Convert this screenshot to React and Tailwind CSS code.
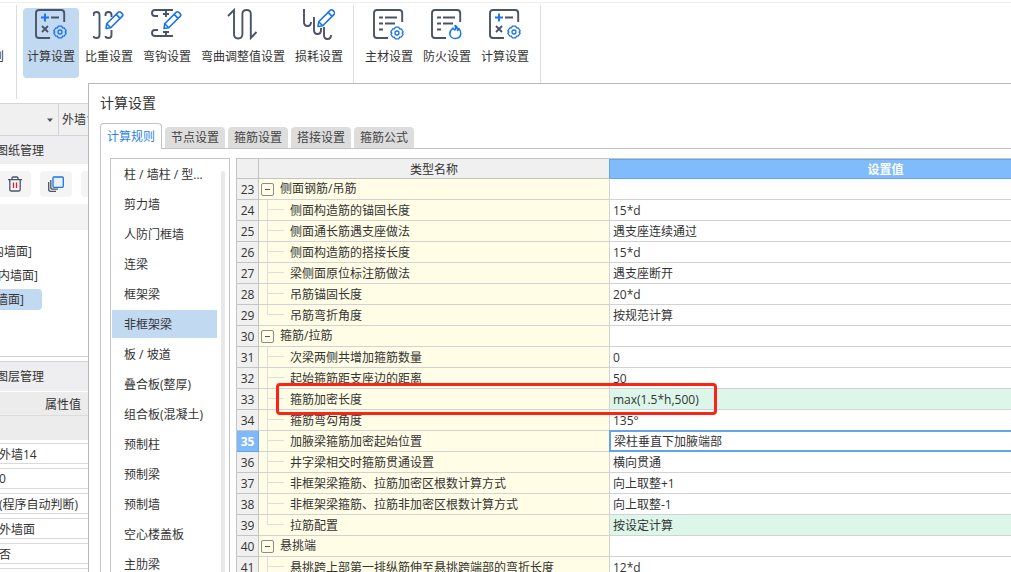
import React from 'react';

const Gear = ({ x, y }) => (
  <g transform={`translate(${x} ${y})`} stroke="#1a73e8" strokeWidth="1.3" fill="none" strokeLinejoin="round">
    <path d="M-1.8 -5.8H1.8L2.5 -4.2L4.3 -4L6.2 -1.2L5.2 0L6.2 1.2L4.3 4L2.5 4.2L1.8 5.8H-1.8L-2.5 4.2L-4.3 4L-6.2 1.2L-5.2 0L-6.2 -1.2L-4.3 -4L-2.5 -4.2Z" />
    <circle r="2" />
  </g>
);

const Pencil = ({ x, y }) => (
  <g transform={`translate(${x} ${y})`} stroke="#1a73e8" strokeWidth="1.6" fill="#fff" strokeLinejoin="round">
    <path d="M0.5 17.5L1.2 12.8L12.6 1.4Q14 0 15.4 1.4L16.6 2.6Q18 4 16.6 5.4L5.2 16.8Z" />
    <path d="M10.6 3.4L14.6 7.4M1.2 12.8L5.2 16.8" />
  </g>
);

const Icon = ({ children }) => (
  <svg width="32" height="32" viewBox="0 0 32 32" fill="none" stroke="#4b5368" strokeWidth="1.9">
    {children}
  </svg>
);

const frame = 'M29.2 14V5Q29.2 2 26.2 2H4Q1 2 1 5V27Q1 30 4 30H15';

const CalcIcon = () => (
  <Icon>
    <path d={frame} />
    <path d="M10 5.5V13.5M6 9.5H14" stroke="#1a73e8" />
    <path d="M16 9.5H24M7 18L13 24M13 18L7 24" />
    <Gear x={25} y={24} />
  </Icon>
);

const WeightIcon = () => (
  <Icon>
    <path d="M0.5 8V6.5Q0.5 4 3.5 4T6.5 7V27Q6.5 30 3.5 30T0.5 28" />
    <path d="M12.5 8V6.5Q12.5 4 15.5 4T18.5 7V9M18.5 22V27Q18.5 30 15.5 30T12.5 28" />
    <Pencil x={12.5} y={3} />
  </Icon>
);

const HookIcon = () => (
  <Icon>
    <path d="M22 2H4Q1 2 1 5T4 8H7M15 2V9M12 6H18" />
    <path d="M22 28H4Q1 28 1 25T4 22H7M15 28V24M12 24H18" />
    <Pencil x={12.5} y={3} />
  </Icon>
);

const BendIcon = () => (
  <Icon>
    <path d="M1 8L7 2V26Q7 30.5 11.2 30.5T15.4 26V6Q15.4 2 19.6 2T23.8 6V30L29.5 24" />
  </Icon>
);

const LossIcon = () => (
  <Icon>
    <path d="M1 1V14Q1 18 4.5 18T8 14" />
    <path d="M11 9V22Q11 26 14.5 26T18 22V20" />
    <path d="M21 19V27Q21 31 24.5 31T28 27" />
    <Pencil x={14.5} y={1} />
  </Icon>
);

const ListLines = () => <path d="M6 9.5H10M12 9.5H24M6 15.5H10M12 15.5H22M6 21.5H10" />;

const MaterialIcon = () => (
  <Icon>
    <path d={frame} />
    <ListLines />
    <Gear x={24} y={25} />
  </Icon>
);

const FireIcon = () => (
  <Icon>
    <path d={frame} />
    <ListLines />
    <path
      d="M24 17.5Q25.5 20 24 22Q22.5 21.5 22 20Q18.5 23 18.8 26Q19.5 30.5 24.2 30.5Q29.6 30.3 29.8 25.5Q29.8 22.5 27.8 20.5Q27.5 22 26.5 22.5Q27 19 24 17.5Z"
      stroke="#1a73e8"
      strokeWidth="1.5"
      strokeLinejoin="round"
    />
  </Icon>
);

const ribbonGroups = [
  [
    { label: '计算设置', icon: CalcIcon, active: true },
    { label: '比重设置', icon: WeightIcon },
    { label: '弯钩设置', icon: HookIcon },
    { label: '弯曲调整值设置', icon: BendIcon, wide: true },
    { label: '损耗设置', icon: LossIcon },
  ],
  [
    { label: '主材设置', icon: MaterialIcon },
    { label: '防火设置', icon: FireIcon },
    { label: '计算设置', icon: CalcIcon },
  ],
];

const properties = [
  { name: '名称', value: '外墙14' },
  { name: '厚度', value: '0' },
  { name: '所附墙材质', value: '(程序自动判断)' },
  { name: '类型', value: '外墙面' },
  { name: '是否', value: '否' },
  { name: '备注', value: '' },
];

const tabs = ['计算规则', '节点设置', '箍筋设置', '搭接设置', '箍筋公式'];

const members = [
  '柱 / 墙柱 / 型...', '剪力墙', '人防门框墙', '连梁', '框架梁', '非框架梁', '板 / 坡道',
  '叠合板(整厚)', '组合板(混凝土)', '预制柱', '预制梁', '预制墙', '空心楼盖板', '主肋梁',
];

const rows = [
  { no: 23, name: '侧面钢筋/吊筋', group: true },
  { no: 24, name: '侧面构造筋的锚固长度', value: '15*d' },
  { no: 25, name: '侧面通长筋遇支座做法', value: '遇支座连续通过' },
  { no: 26, name: '侧面构造筋的搭接长度', value: '15*d' },
  { no: 27, name: '梁侧面原位标注筋做法', value: '遇支座断开' },
  { no: 28, name: '吊筋锚固长度', value: '20*d' },
  { no: 29, name: '吊筋弯折角度', value: '按规范计算', last: true },
  { no: 30, name: '箍筋/拉筋', group: true },
  { no: 31, name: '次梁两侧共增加箍筋数量', value: '0' },
  { no: 32, name: '起始箍筋距支座边的距离', value: '50' },
  { no: 33, name: '箍筋加密长度', value: 'max(1.5*h,500)', changed: true, marked: true },
  { no: 34, name: '箍筋弯勾角度', value: '135°' },
  { no: 35, name: '加腋梁箍筋加密起始位置', value: '梁柱垂直下加腋端部', selected: true },
  { no: 36, name: '井字梁相交时箍筋贯通设置', value: '横向贯通' },
  { no: 37, name: '非框架梁箍筋、拉筋加密区根数计算方式', value: '向上取整+1' },
  { no: 38, name: '非框架梁箍筋、拉筋非加密区根数计算方式', value: '向上取整-1' },
  { no: 39, name: '拉筋配置', value: '按设定计算', changed: true, last: true },
  { no: 40, name: '悬挑端', group: true },
  { no: 41, name: '悬挑跨上部第一排纵筋伸至悬挑跨端部的弯折长度', value: '12*d' },
];

const Ribbon = () => (
  <header className="flex h-[103px] shrink-0 items-start pt-0.5">
    <div className="flex w-full items-start border-t border-[#f0f0f0]">
      <div className="flex w-4 shrink-0 justify-end overflow-hidden pt-11 pr-3">
        <span className="leading-5">则</span>
      </div>
      {ribbonGroups.map((group, i) => (
        <React.Fragment key={i}>
          <div className={`mt-0.5 w-px bg-[#dcdcdc] ${i === 0 ? 'h-[94px]' : 'h-[98px]'}`} />
          <div className={`flex gap-0.5 pt-[5px] ${i === 0 ? 'px-1.5' : 'px-[7px]'}`}>
            {group.map(({ label, icon: Glyph, active, wide }) => (
              <button
                key={label}
                className={`flex h-[70px] flex-col items-center gap-1.5 rounded-sm leading-[22px] ${wide ? 'w-[92px]' : 'w-14'} ${active ? 'bg-[#c2d9f2]' : ''}`}
              >
                <Glyph />
                <span className="whitespace-nowrap">{label}</span>
              </button>
            ))}
          </div>
        </React.Fragment>
      ))}
      <div className="mt-0.5 h-[98px] w-px bg-[#dcdcdc]" />
    </div>
  </header>
);

const SidePanel = () => (
  <aside className="flex w-[88px] grow flex-col overflow-hidden">
    <div className="flex h-[33px] shrink-0 border-y border-[#d4d4d4] bg-[#f0f0f0]">
      <div className="flex w-[59px] shrink-0 items-center border-r border-[#d4d4d4]">
        <select aria-label="楼层" className="h-full w-[47px] appearance-none">
          <option></option>
        </select>
        <svg width="6" height="4" viewBox="0 0 6 4"><path d="M0 0.5H6L3 4Z" fill="#4b5368" /></svg>
      </div>
      <select aria-label="构件" className="w-20 shrink-0 appearance-none pl-[3px]">
        <option>外墙14</option>
      </select>
    </div>
    <h2 className="h-7 shrink-0 bg-[#eeeef1] leading-[29px]"><span className="-ml-1">图纸管理</span></h2>
    <div className="flex h-10 shrink-0 items-center gap-[9px]">
      <button aria-label="删除" className="-ml-0.5 flex h-[26px] w-[33px] shrink-0 items-center justify-center rounded bg-[#f4f4f4]">
        <svg width="16" height="16" viewBox="0 0 16 16" fill="none" stroke="#4b5368" strokeWidth="1.3">
          <path d="M1 3.7H15M5 3.7V2.2Q5 1 6.2 1H9.8Q11 1 11 2.2V3.7M2.8 3.7V13.4Q2.8 15 4.4 15H11.6Q13.2 15 13.2 13.4V3.7" />
          <path d="M6.5 6.5V12M9.5 6.5V12" stroke="#e02030" />
        </svg>
      </button>
      <button aria-label="复制" className="flex h-[26px] w-8 shrink-0 items-center justify-center rounded bg-[#f4f4f4]">
        <svg width="16" height="16" viewBox="0 0 16 16" fill="none" stroke="#4b5368" strokeWidth="1.3">
          <path d="M0.7 6V13.3Q0.7 15.3 2.7 15.3H8M2.8 4V11.2Q2.8 13.2 4.8 13.2H10" />
          <rect x="5" y="1" width="10.3" height="10.3" rx="1" stroke="#1a73e8" fill="#e6f1fd" />
        </svg>
      </button>
      <button aria-label="更多" className="h-[26px] w-8 shrink-0 rounded bg-[#f4f4f4]" />
    </div>
    <div className="h-[26px] shrink-0 bg-[#f3f3f4]" />
    <ul className="flex h-[127px] shrink-0 flex-col gap-[3px] border-b border-[#cfcfcf] pt-[11px] leading-[21px]">
      <li className="-ml-2 h-[21px]">内墙面]</li>
      <li className="-ml-0.5 h-[21px]">内墙面]</li>
      <li className="h-[21px] w-[42px] rounded-r-sm bg-[#c2d9f2]"><span className="-ml-1">墙面]</span></li>
    </ul>
    <h2 className="mt-1 h-[30px] shrink-0 border-t border-[#cfcfcf] bg-[#eeeef1] leading-[30px]"><span className="-ml-1">图层管理</span></h2>
    <div className="mt-px h-6 shrink-0 border-b border-[#dcdcdc] bg-[#ececec] pr-[7px] text-right leading-[26px]">属性值</div>
    <div className="h-6 shrink-0 bg-[#ececec]" />
    <div className="mt-[3px] flex flex-col gap-1">
      {properties.map((p) => (
        <input
          key={p.name}
          aria-label={p.name}
          defaultValue={p.value}
          className="-ml-1 h-[21px] w-24 border border-[#d9d9d9] pl-0.5"
        />
      ))}
    </div>
  </aside>
);

const NameCell = ({ row }) => {
  if (row.group) {
    return (
      <div className="flex h-5 items-center gap-1.5 pl-0.5">
        <button aria-label="收起" className="flex size-[13px] items-center justify-center rounded-xs border border-[#8c8c8c]">
          <span className="h-px w-[5px] bg-[#555]" />
        </button>
        <span className="leading-[22px]">{row.name}</span>
      </div>
    );
  }
  return (
    <div className="flex h-5 pl-2">
      <div className={`w-px bg-[#dedede] ${row.last ? 'h-2.5' : 'h-5'}`} />
      <div className="mt-[9px] h-px w-4 bg-[#dedede]" />
      <span className="pl-1.5 leading-[22px] whitespace-nowrap">{row.name}</span>
    </div>
  );
};

const SettingsTable = () => (
  <table className="w-full min-w-[925px] table-fixed border-separate border-spacing-0 border-t border-l border-[#c4c4c4]">
    <colgroup>
      <col className="w-[22px]" />
      <col className="w-[351px]" />
      <col />
    </colgroup>
    <thead>
      <tr>
        <th className="border-r border-b border-[#c4c4c4] bg-[#f0f0f0] p-0"></th>
        <th className="border-r border-b border-[#c4c4c4] border-r-[#62a5e8] bg-[#f0f0f0] p-0 font-normal">
          <div className="h-[19px] leading-[21px]">类型名称</div>
        </th>
        <th className="border-y border-[#62a5e8] bg-[#80bbfb] p-0 font-bold text-white">
          <div className="h-[18px] leading-5">设置值</div>
        </th>
      </tr>
    </thead>
    <tbody>
      {rows.map((row) => (
        <tr key={row.no}>
          <td className={`border-r border-b p-0 text-center ${row.selected ? 'border-[#62a5e8] bg-[#7fb9f9] font-bold text-white' : 'border-[#c4c4c4] bg-[#f0f0f0]'}`}>
            <div className="h-5 leading-[22px]">{row.no}</div>
          </td>
          <td className="relative border-r border-b border-[#d2d2d2] bg-[#fffde6] p-0">
            <NameCell row={row} />
            {row.marked && (
              <div className="absolute -top-1.5 left-[17px] z-10 h-8 w-[441px] rounded-sm border-3 border-[#fb2415]" />
            )}
          </td>
          <td className={`border-b border-[#d2d2d2] p-0 ${row.changed ? 'bg-[#ddf6ea]' : 'bg-white'} ${row.selected ? 'relative' : ''}`}>
            {row.selected ? (
              <input
                aria-label={row.name}
                defaultValue={row.value}
                className="-my-px -ml-px block h-[22px] w-full border-2 border-[#62a5e8] bg-white pl-[3px]"
              />
            ) : (
              <div className="h-5 pl-[3px] leading-[22px]">{row.value}</div>
            )}
          </td>
        </tr>
      ))}
    </tbody>
  </table>
);

const SettingsDialog = () => (
  <section className="absolute top-[83px] right-0 bottom-0 left-[88px] flex flex-col overflow-hidden border-t border-l border-[#b8b8b8] bg-white pl-[11px]">
    <h1 className="h-[39px] shrink-0 text-sm leading-[37px]">计算设置</h1>
    <nav className="flex shrink-0 items-end gap-[3px]">
      {tabs.map((tab, i) => (
        <button
          key={tab}
          className={
            i === 0
              ? 'z-10 -mb-px h-[26px] w-[62px] rounded-t border border-b-0 border-[#c0c3c9] bg-white text-[#2f7fe6]'
              : 'h-[21px] w-[60px] rounded-t bg-[#dddddd] text-[#444]'
          }
        >
          {tab}
        </button>
      ))}
    </nav>
    <div className="flex min-h-0 grow gap-1.5 border-t border-l border-[#c0c3c9] pt-[9px] pl-[9px]">
      <div className="flex w-[120px] shrink-0 overflow-hidden border border-b-0 border-[#c4c4c4] pt-px pl-px">
        <ul className="flex w-[105px] shrink-0 flex-col gap-0.5">
          {members.map((m) => (
            <li key={m} className="h-7 shrink-0">
              <button className={`block h-7 w-full pl-3 text-left whitespace-nowrap ${m === '非框架梁' ? 'bg-[#c2d9f2]' : ''}`}>
                <span className="block h-7 leading-[30px]">{m}</span>
              </button>
            </li>
          ))}
        </ul>
        <div className="mt-[11px] ml-1 w-1 shrink-0 rounded-t bg-[#e8e8e8]" />
      </div>
      <div className="min-w-0 grow overflow-hidden">
        <SettingsTable />
      </div>
    </div>
  </section>
);

export default function App() {
  return (
    <div className="relative flex h-screen flex-col overflow-hidden bg-white font-['Open_Sans','Noto_Sans_CJK_SC',sans-serif] text-xs text-[#333]">
      <Ribbon />
      <SidePanel />
      <SettingsDialog />
    </div>
  );
}
